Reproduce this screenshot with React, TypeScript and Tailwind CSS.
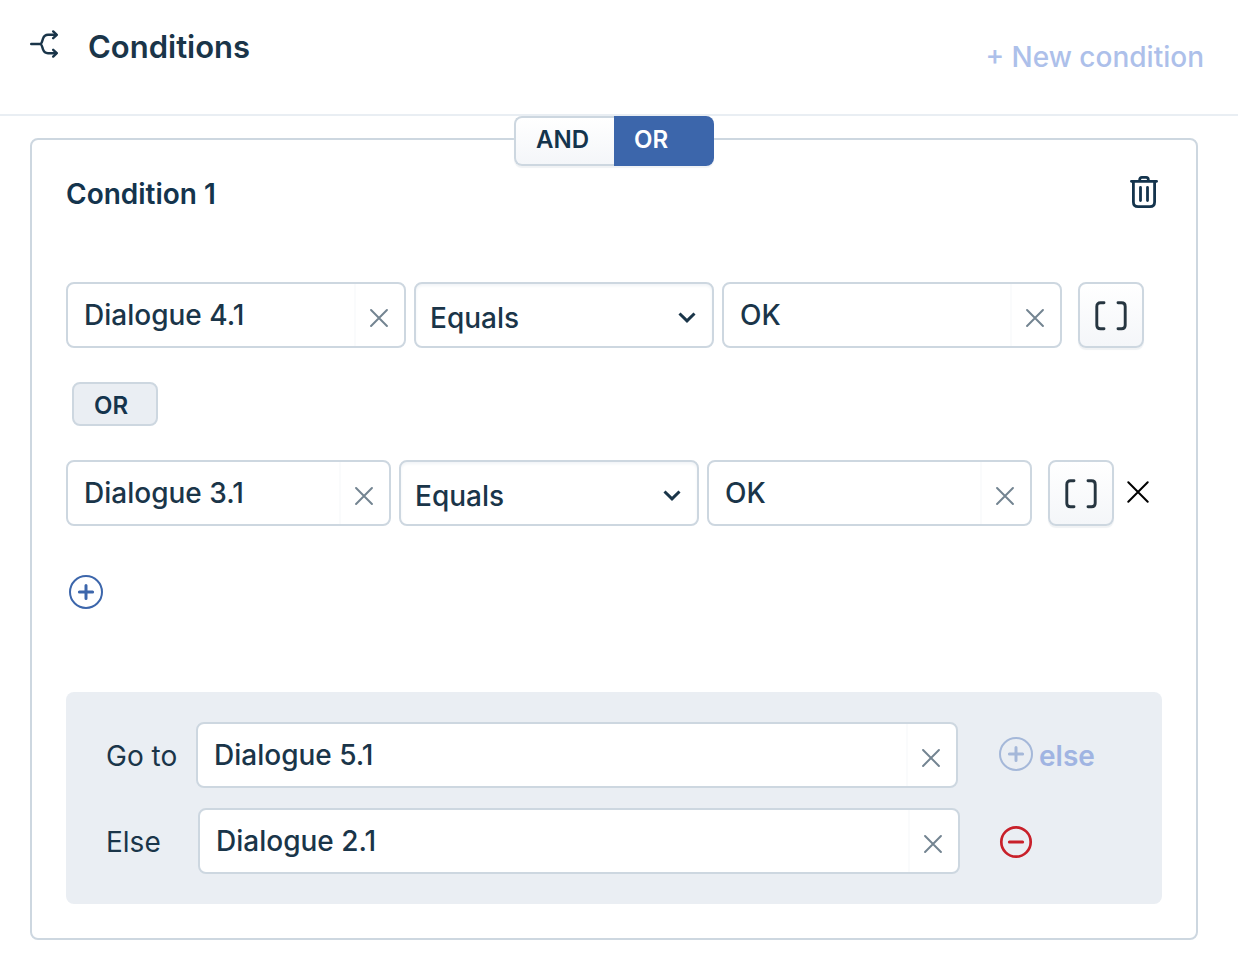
import React, { useState } from 'react';

const BranchIcon = () => (
    <svg className="h-7 w-7" viewBox="0 0 28 28" fill="none" stroke="currentColor" strokeWidth="2.4" strokeLinecap="round" strokeLinejoin="round">
        <path d="M1.2 14h9.6M26 4.8h-8c-2.500 0-4 1-5 3.800-.8 2.400-.9 4-2.200 5.400 1.300 1.400 1.400 3 2.200 5.400 1 2.800 2.500 3.800 5 3.800h8" />
        <path d="M23.200 1.400 26.800 4.800l-3.600 3.400M23.200 19.800 26.800 23.200l-3.600 3.400" />
    </svg>
);

const TrashIcon = () => (
    <svg className="h-8 w-7" viewBox="0 0 28 32" fill="none" stroke="currentColor" strokeWidth="2.8" strokeLinecap="round" strokeLinejoin="round">
        <path d="M1.400 5.300h25.200M9.700 5V3.600c0-1.400.8-2.200 2.200-2.200h4.200c1.400 0 2.200.8 2.200 2.200V5" />
        <path d="M3.400 5.500V26c0 3 1.700 4.600 4.700 4.600h11.800c3 0 4.700-1.600 4.700-4.600V5.500M10.500 11.500v13M17.500 11.500v13" />
    </svg>
);

const CrossIcon = ({ className }: { className: string }) => (
    <svg className={className} viewBox="0 0 22 22" fill="none" stroke="currentColor" strokeLinecap="round">
        <path d="M1.300 1.300l19.400 19.400M20.700 1.300L1.300 20.700" />
    </svg>
);

const BracketsIcon = () => (
    <svg className="h-[30px] w-8" viewBox="0 0 32 30" fill="none" stroke="currentColor" strokeWidth="2.9" strokeLinecap="round" strokeLinejoin="round">
        <path d="M9 1.800H5.500c-2.400 0-3.700 1.300-3.700 3.600v18.800c0 2.300 1.300 3.600 3.700 3.600H9" />
        <path d="M23 1.800h3.500c2.400 0 3.700 1.300 3.700 3.600v18.800c0 2.300-1.300 3.600-3.700 3.600H23" />
    </svg>
);

const PlusCircleIcon = () => (
    <svg className="h-[34px] w-[34px]" viewBox="0 0 34 34" fill="none" stroke="currentColor" strokeLinecap="round">
        <circle cx="17" cy="17" r="16" strokeWidth="2" />
        <path d="M17 10.400v13.200M10.400 17h13.200" strokeWidth="3" />
    </svg>
);

const MinusCircleIcon = () => (
    <svg className="h-[34px] w-[34px]" viewBox="0 0 34 34" fill="none" stroke="currentColor" strokeLinecap="round">
        <circle cx="17" cy="17" r="14.700" strokeWidth="2.7" />
        <path d="M10.400 17h13.200" strokeWidth="3" />
    </svg>
);

// Text box with a clear button on its right side
const Field = ({ id, label, initial }: { id: string; label?: string; initial: string }) => {
    const [value, setValue] = useState(initial);

    return (
        <div className="flex h-[66px] min-w-0 flex-1 overflow-hidden rounded-lg border-2 border-[#cdd7e0] bg-white">
            <input
                id={id}
                aria-label={label}
                value={value}
                onChange={(e) => setValue(e.target.value)}
                className="min-w-0 flex-1 px-4 text-[28px] font-medium text-[#1a3549] outline-none"
            />
            <button
                type="button"
                aria-label="Clear"
                onClick={() => setValue('')}
                className="flex w-[50px] items-center justify-center border-l-2 border-[#fafbfc] pt-1.5 pr-0.5 text-[#738491]"
            >
                <CrossIcon className="h-[18px] w-[18px] stroke-[2.4]" />
            </button>
        </div>
    );
};

const OperatorSelect = ({ id }: { id: string }) => (
    <div className="relative w-[300px] shrink-0">
        <select
            id={id}
            aria-label="Operator"
            className="h-[66px] w-full appearance-none rounded-lg border-2 border-[#cdd7e0] bg-white px-3.5 pt-1.5 text-[28px] font-medium text-[#1a3549] shadow-[inset_0_2px_3px_#f1f4f7] outline-none"
        >
            <option>Equals</option>
            <option>Contains</option>
        </select>
        <svg className="pointer-events-none absolute top-7 right-[17px] h-4 w-5" viewBox="0 0 20 16" fill="none" stroke="currentColor" strokeWidth="3">
            <path d="M2.500 3.500l7.500 7.300 7.500-7.300" />
        </svg>
    </div>
);

const VariableButton = () => (
    <button
        type="button"
        aria-label="Insert variable"
        className="ml-2 flex h-[66px] w-[66px] shrink-0 items-center justify-center rounded-lg border-2 border-[#cdd7e0] bg-linear-to-b from-white to-[#f4f6f9] pt-0.5 text-[#263540] shadow-[0_2px_1px_#f0f2f4]"
    >
        <BracketsIcon />
    </button>
);

const App = () => {
    const [mode, setMode] = useState('OR');

    const active = 'border-[#3c66ab] bg-[#3c66ab] text-white';
    const inactive = 'border-[#cdd7e0] bg-linear-to-b from-white to-[#f4f6f9] text-[#14344d]';

    return (
        <div className="min-h-screen bg-white font-['Inter','Liberation_Sans',sans-serif] text-[#1a3549]">
            <header className="flex h-[116px] justify-between border-b-2 border-[#e9eef3] pr-[34px] pl-[30px]">
                <div className="flex h-[94px] items-center gap-[30px]">
                    <div className="pb-1.5">
                        <BranchIcon />
                    </div>
                    <h1 className="text-[31px] font-semibold">Conditions</h1>
                </div>
                <button type="button" className="text-[28px] font-medium text-[#adc0ea]">+ New condition</button>
            </header>

            <main className="pt-[22px] pr-10 pb-6 pl-[30px]">
                <section className="relative rounded-lg border-2 border-[#cdd7e0] px-[34px] pt-8 pb-[34px]">
                    {/* AND / OR switch sitting on the card border */}
                    <div className="absolute -top-6 left-1/2 flex h-[50px] w-[200px] -translate-x-1/2 rounded-lg text-2xl font-semibold shadow-[0_2px_1px_#f0f2f4]">
                        <button type="button" onClick={() => setMode('AND')} className={`w-1/2 rounded-l-lg border-2 border-r-0 pb-0.5 pl-5 text-left ${mode === 'AND' ? active : inactive}`}>
                            AND
                        </button>
                        <button type="button" onClick={() => setMode('OR')} className={`w-1/2 rounded-r-lg border-2 border-l-0 pb-0.5 pl-5 text-left ${mode === 'OR' ? active : inactive}`}>
                            OR
                        </button>
                    </div>

                    <div className="flex h-11 items-center justify-between text-[#14344d]">
                        <h2 className="text-[28px] font-semibold">Condition 1</h2>
                        <button type="button" aria-label="Delete condition" className="mr-1 pb-1">
                            <TrashIcon />
                        </button>
                    </div>

                    <div className="mt-[66px] flex gap-2 pr-[18px]">
                        <Field id="left-1" label="Variable" initial="Dialogue 4.1" />
                        <OperatorSelect id="operator-1" />
                        <Field id="right-1" label="Value" initial="OK" />
                        <VariableButton />
                    </div>

                    <div className="my-[34px] ml-1.5 flex h-11 w-[86px] items-center rounded-lg border-2 border-[#cdd7e0] bg-[#eaeef3] pt-1 pl-5 text-2xl font-semibold text-[#14344d]">
                        OR
                    </div>

                    <div className="flex">
                        <div className="flex min-w-0 flex-1 gap-2">
                            <Field id="left-2" label="Variable" initial="Dialogue 3.1" />
                            <OperatorSelect id="operator-2" />
                            <Field id="right-2" label="Value" initial="OK" />
                            <VariableButton />
                        </div>
                        <button type="button" aria-label="Remove row" className="flex w-12 items-center justify-center pb-0.5 text-black">
                            <CrossIcon className="h-[22px] w-[22px] stroke-2" />
                        </button>
                    </div>

                    <button type="button" aria-label="Add row" className="mt-[49px] ml-[3px] block text-[#3c66ab]">
                        <PlusCircleIcon />
                    </button>

                    <div className="mt-[83px] space-y-5 rounded-lg bg-[#eaeef3] px-10 py-[30px]">
                        <div className="flex items-center">
                            <label htmlFor="go-to" className="w-[90px] pt-0.5 text-[28px]">Go to</label>
                            <Field id="go-to" initial="Dialogue 5.1" />
                            <div className="w-[164px] pt-0.5 pl-[41px]">
                                <button type="button" className="flex items-center gap-1.5 text-[28px] font-semibold text-[#a0b4e2]">
                                    <span className="pb-1 text-[#a5b8d9]">
                                        <PlusCircleIcon />
                                    </span>
                                    else
                                </button>
                            </div>
                        </div>
                        <div className="flex items-center">
                            <label htmlFor="else" className="w-[92px] pt-0.5 text-[28px]">Else</label>
                            <Field id="else" initial="Dialogue 2.1" />
                            <div className="w-[162px] pt-0.5 pl-[39px]">
                                <button type="button" aria-label="Remove else" className="block text-[#c8202a]">
                                    <MinusCircleIcon />
                                </button>
                            </div>
                        </div>
                    </div>
                </section>
            </main>
        </div>
    );
};

export default App;
